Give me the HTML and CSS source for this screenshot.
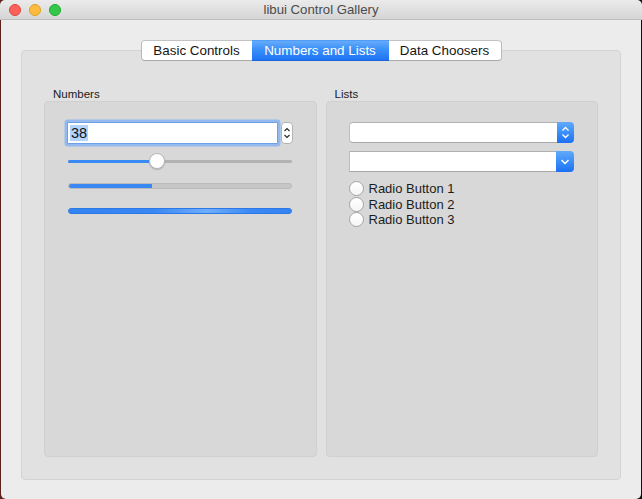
FILE: index.html
```html
<!DOCTYPE html>
<html>
<head>
<meta charset="utf-8">
<title>libui Control Gallery</title>
<link rel="stylesheet" href="styles.css">
</head>
<body>
<div class="window">
  <div class="titlebar">
    <div class="lights">
      <span class="light red"></span>
      <span class="light yellow"></span>
      <span class="light green"></span>
    </div>
    <div class="title">libui Control Gallery</div>
    <div></div>
  </div>
  <div class="main">
    <div class="tabview">
      <div class="tabs">
        <div class="tab tab-basic">Basic Controls</div>
        <div class="tab tab-numbers active">Numbers and Lists</div>
        <div class="tab tab-data">Data Choosers</div>
      </div>
      <div class="tabbox">
        <div class="group">
          <div class="glabel">Numbers</div>
          <div class="gbox numbers">
            <div class="spin-row">
              <div class="field"><span class="sel">38</span></div>
              <div class="stepper">
                <svg width="12" height="22" viewBox="0 0 12 22"><polyline points="3.5,9 6,6.5 8.5,9" class="chev-dark"/><polyline points="3.5,13 6,15.5 8.5,13" class="chev-dark"/></svg>
              </div>
            </div>
            <div class="slider">
              <div class="track"><div class="fill" style="width:89px"></div></div>
              <div class="knob" style="left:81px"></div>
            </div>
            <div class="progress"><div class="pfill" style="width:38%"></div></div>
            <div class="progress indeterminate"></div>
          </div>
        </div>
        <div class="group">
          <div class="glabel">Lists</div>
          <div class="gbox lists">
            <div class="popup">
              <div class="popup-field"></div>
              <div class="popup-btn">
                <svg width="17" height="21" viewBox="0 0 17 21"><polyline points="5.5,8.5 8.5,5.5 11.5,8.5" class="chev-light"/><polyline points="5.5,12.5 8.5,15.5 11.5,12.5" class="chev-light"/></svg>
              </div>
            </div>
            <div class="popup combo">
              <div class="popup-field"></div>
              <div class="popup-btn">
                <svg width="18" height="21" viewBox="0 0 18 21"><polyline points="5.5,9 9,12.5 12.5,9" class="chev-light"/></svg>
              </div>
            </div>
            <div class="radios">
              <div class="radio"><span class="circle"></span><span class="rlabel">Radio Button 1</span></div>
              <div class="radio"><span class="circle"></span><span class="rlabel">Radio Button 2</span></div>
              <div class="radio"><span class="circle"></span><span class="rlabel">Radio Button 3</span></div>
            </div>
          </div>
        </div>
      </div>
    </div>
  </div>
</div>
</body>
</html>
```

FILE: styles.css
```css
* { box-sizing: border-box; }

html, body {
  margin: 0;
  padding: 0;
}

body {
  width: 642px;
  height: 499px;
  overflow: hidden;
  background: linear-gradient(to right, #5b231a 0%, #3a1a16 50%, #101010 100%);
  font-family: "Liberation Sans", Arial, sans-serif;
  color: #1e1e1e;
}

.window {
  width: 642px;
  height: 499px;
  display: flex;
  flex-direction: column;
}

.titlebar {
  height: 20px;
  display: grid;
  grid-template-columns: 1fr auto 1fr;
  align-items: center;
  background: linear-gradient(to bottom, #ebebeb 0%, #d5d5d5 100%);
  border-bottom: 1px solid #bdbdbd;
  border-radius: 5px 5px 0 0;
}

.lights {
  display: flex;
  gap: 8px;
  padding-left: 9px;
}

.light {
  width: 12px;
  height: 12px;
  border-radius: 50%;
  display: block;
}
.red { background: #fc605b; border: 1px solid #e0443e; }
.yellow { background: #fdbc40; border: 1px solid #dea123; }
.green { background: #34c84a; border: 1px solid #1aab29; }

.title {
  font-size: 13.2px;
  color: #4b4b4b;
  line-height: 19px;
}

.main {
  flex: 1;
  margin: 0 1px;
  background: #ececec;
  border-radius: 0 0 5px 5px;
  padding: 20px 20px 0 20px;
}

.tabview {
  width: 600px;
  display: flex;
  flex-direction: column;
}

.tabs {
  display: flex;
  justify-content: center;
  position: relative;
  z-index: 1;
  margin-bottom: -11px;
  height: 21px;
}

.tab {
  height: 21px;
  font-size: 13.4px;
  line-height: 19px;
  text-align: center;
  background: #ffffff;
  border-top: 1px solid #c3c3c3;
  border-bottom: 1px solid #a9a9a9;
  color: #151515;
}

.tab-basic {
  width: 111px;
  border-left: 1px solid #b8b8b8;
  border-radius: 4px 0 0 4px;
}

.tab-numbers { width: 137px; }

.tab-data {
  width: 113px;
  border-right: 1px solid #b8b8b8;
  border-radius: 0 4px 4px 0;
}

.tab.active {
  background: linear-gradient(to bottom, #66abfa 0%, #3a8ff8 45%, #1f74f4 100%);
  border-top-color: #4f9bf8;
  border-bottom-color: #1b64e0;
  color: #ffffff;
}

.tabbox {
  height: 430px;
  background: #e1e1e1;
  border: 1px solid #d4d4d4;
  border-radius: 4px;
  padding: 37px 22px 22px 22px;
  display: grid;
  grid-template-columns: 1fr 1fr;
  gap: 9px;
}

.group {
  display: flex;
  flex-direction: column;
}

.glabel {
  font-size: 11.5px;
  line-height: 13px;
  height: 13px;
  padding-left: 9px;
  color: #202020;
}

.gbox {
  flex: 1;
  background: #d8d8d8;
  border: 1px solid #d0d0d0;
  border-radius: 4px;
}

.numbers {
  padding: 20px 23px 0 22px;
  display: flex;
  flex-direction: column;
}

.spin-row {
  display: flex;
  gap: 3px;
  height: 22px;
}

.field {
  flex: 1;
  background: #ffffff;
  border: 1px solid #6f9fe4;
  box-shadow: 0 0 0 2.5px #94b9ef;
  font-size: 14.5px;
  line-height: 20px;
  padding-left: 2px;
  border-radius: 1px;
}

.sel {
  background: #b3d5fd;
  color: #111;
  padding: 0 1px;
}

.stepper {
  width: 12px;
  height: 22px;
  background: #ffffff;
  border: 1px solid #b3b3b3;
  border-radius: 4px;
  overflow: hidden;
}
.stepper svg {
  display: block;
  margin: -1px 0 0 -1px;
}

.chev-dark {
  fill: none;
  stroke: #2b2b2b;
  stroke-width: 1.2;
}
.chev-light {
  fill: none;
  stroke: #ffffff;
  stroke-width: 1.4;
}

.slider {
  position: relative;
  height: 16px;
  margin: 9px 1px 0 1px;
  display: flex;
  align-items: center;
}

.track {
  width: 100%;
  height: 3px;
  background: #b2b2b2;
  border-radius: 2px;
  overflow: hidden;
}
.fill {
  height: 100%;
  background: #3a8af4;
}

.knob {
  position: absolute;
  top: 0;
  width: 16px;
  height: 16px;
  border-radius: 50%;
  background: #ffffff;
  border: 1px solid #b9b9b9;
  box-shadow: 0 1px 1px rgba(0,0,0,0.18);
}

.progress {
  height: 6px;
  margin: 14px 1px 0 1px;
  background: #c6c6c6;
  border: 1px solid #bbbbbb;
  border-radius: 3px;
  overflow: hidden;
}
.pfill {
  background: #3a88f4;
  margin: -1px 0 0 -1px;
  height: 6px;
}

.indeterminate {
  margin-top: 19px;
  border: 1px solid #2c78e6;
  background: linear-gradient(to right, #3383f2 0%, #3887f3 38%, #70aefa 62%, #3a89f4 82%, #3383f2 100%);
}

.lists {
  padding: 20px 23px 0 22px;
  display: flex;
  flex-direction: column;
}

.popup {
  display: flex;
  height: 21px;
}

.popup-field {
  flex: 1;
  background: #ffffff;
  border: 1px solid #bdbdbd;
  border-top-color: #b0b0b0;
  border-bottom-color: #a8a8a8;
  border-right: none;
  border-radius: 4px 0 0 4px;
}

.popup-btn {
  width: 17px;
  background: linear-gradient(to bottom, #63a9fa 0%, #3a8ff8 50%, #1c70f3 100%);
  border-radius: 0 4px 4px 0;
}
.popup-btn svg { display: block; }

.combo {
  margin-top: 8px;
}
.combo .popup-field {
  border-radius: 0;
}
.combo .popup-btn {
  width: 18px;
}

.radios {
  margin-top: 9px;
  display: flex;
  flex-direction: column;
}

.radio {
  display: flex;
  align-items: center;
  height: 15.5px;
  gap: 5px;
}

.circle {
  width: 15px;
  height: 15px;
  border-radius: 50%;
  background: linear-gradient(to bottom, #ffffff 0%, #f6f6f6 100%);
  border: 1px solid #a4a4a4;
  display: block;
  flex: none;
}

.rlabel {
  font-size: 13px;
  line-height: 15px;
  color: #1c1c1c;
}
```
